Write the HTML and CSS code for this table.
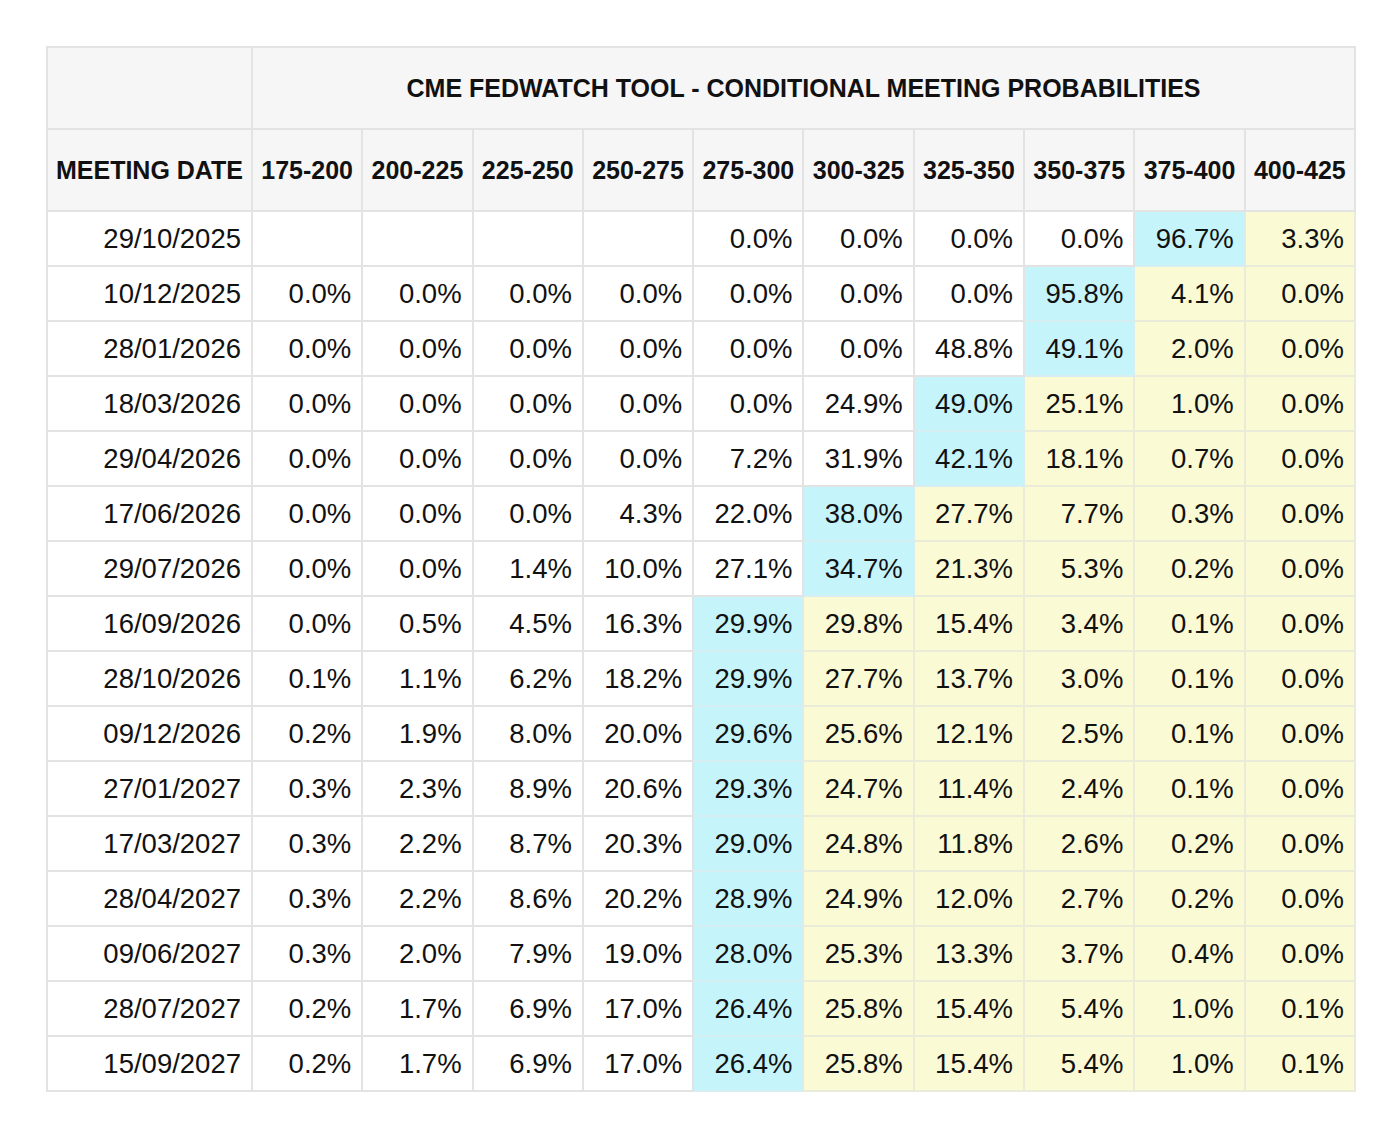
FILE: index.html
```html
<!DOCTYPE html>
<html>
<head>
<meta charset="utf-8">
<link rel="stylesheet" href="styles.css">
</head>
<body>
<table class="fw">
<colgroup>
<col class="c-date">
<col class="c-rate"><col class="c-rate"><col class="c-rate"><col class="c-rate"><col class="c-rate">
<col class="c-rate"><col class="c-rate"><col class="c-rate"><col class="c-rate"><col class="c-rate">
</colgroup>
<thead>
<tr class="hrow">
<th></th>
<th colspan="10">CME FEDWATCH TOOL - CONDITIONAL MEETING PROBABILITIES</th>
</tr>
<tr class="hrow">
<th>MEETING DATE</th>
<th>175-200</th><th>200-225</th><th>225-250</th><th>250-275</th><th>275-300</th>
<th>300-325</th><th>325-350</th><th>350-375</th><th>375-400</th><th>400-425</th>
</tr>
</thead>
<tbody>
<tr><td>29/10/2025</td><td></td><td></td><td></td><td></td><td>0.0%</td><td>0.0%</td><td>0.0%</td><td>0.0%</td><td class="b">96.7%</td><td class="y">3.3%</td></tr>
<tr><td>10/12/2025</td><td>0.0%</td><td>0.0%</td><td>0.0%</td><td>0.0%</td><td>0.0%</td><td>0.0%</td><td>0.0%</td><td class="b">95.8%</td><td class="y">4.1%</td><td class="y">0.0%</td></tr>
<tr><td>28/01/2026</td><td>0.0%</td><td>0.0%</td><td>0.0%</td><td>0.0%</td><td>0.0%</td><td>0.0%</td><td>48.8%</td><td class="b">49.1%</td><td class="y">2.0%</td><td class="y">0.0%</td></tr>
<tr><td>18/03/2026</td><td>0.0%</td><td>0.0%</td><td>0.0%</td><td>0.0%</td><td>0.0%</td><td>24.9%</td><td class="b">49.0%</td><td class="y">25.1%</td><td class="y">1.0%</td><td class="y">0.0%</td></tr>
<tr><td>29/04/2026</td><td>0.0%</td><td>0.0%</td><td>0.0%</td><td>0.0%</td><td>7.2%</td><td>31.9%</td><td class="b">42.1%</td><td class="y">18.1%</td><td class="y">0.7%</td><td class="y">0.0%</td></tr>
<tr><td>17/06/2026</td><td>0.0%</td><td>0.0%</td><td>0.0%</td><td>4.3%</td><td>22.0%</td><td class="b">38.0%</td><td class="y">27.7%</td><td class="y">7.7%</td><td class="y">0.3%</td><td class="y">0.0%</td></tr>
<tr><td>29/07/2026</td><td>0.0%</td><td>0.0%</td><td>1.4%</td><td>10.0%</td><td>27.1%</td><td class="b">34.7%</td><td class="y">21.3%</td><td class="y">5.3%</td><td class="y">0.2%</td><td class="y">0.0%</td></tr>
<tr><td>16/09/2026</td><td>0.0%</td><td>0.5%</td><td>4.5%</td><td>16.3%</td><td class="b">29.9%</td><td class="y">29.8%</td><td class="y">15.4%</td><td class="y">3.4%</td><td class="y">0.1%</td><td class="y">0.0%</td></tr>
<tr><td>28/10/2026</td><td>0.1%</td><td>1.1%</td><td>6.2%</td><td>18.2%</td><td class="b">29.9%</td><td class="y">27.7%</td><td class="y">13.7%</td><td class="y">3.0%</td><td class="y">0.1%</td><td class="y">0.0%</td></tr>
<tr><td>09/12/2026</td><td>0.2%</td><td>1.9%</td><td>8.0%</td><td>20.0%</td><td class="b">29.6%</td><td class="y">25.6%</td><td class="y">12.1%</td><td class="y">2.5%</td><td class="y">0.1%</td><td class="y">0.0%</td></tr>
<tr><td>27/01/2027</td><td>0.3%</td><td>2.3%</td><td>8.9%</td><td>20.6%</td><td class="b">29.3%</td><td class="y">24.7%</td><td class="y">11.4%</td><td class="y">2.4%</td><td class="y">0.1%</td><td class="y">0.0%</td></tr>
<tr><td>17/03/2027</td><td>0.3%</td><td>2.2%</td><td>8.7%</td><td>20.3%</td><td class="b">29.0%</td><td class="y">24.8%</td><td class="y">11.8%</td><td class="y">2.6%</td><td class="y">0.2%</td><td class="y">0.0%</td></tr>
<tr><td>28/04/2027</td><td>0.3%</td><td>2.2%</td><td>8.6%</td><td>20.2%</td><td class="b">28.9%</td><td class="y">24.9%</td><td class="y">12.0%</td><td class="y">2.7%</td><td class="y">0.2%</td><td class="y">0.0%</td></tr>
<tr><td>09/06/2027</td><td>0.3%</td><td>2.0%</td><td>7.9%</td><td>19.0%</td><td class="b">28.0%</td><td class="y">25.3%</td><td class="y">13.3%</td><td class="y">3.7%</td><td class="y">0.4%</td><td class="y">0.0%</td></tr>
<tr><td>28/07/2027</td><td>0.2%</td><td>1.7%</td><td>6.9%</td><td>17.0%</td><td class="b">26.4%</td><td class="y">25.8%</td><td class="y">15.4%</td><td class="y">5.4%</td><td class="y">1.0%</td><td class="y">0.1%</td></tr>
<tr><td>15/09/2027</td><td>0.2%</td><td>1.7%</td><td>6.9%</td><td>17.0%</td><td class="b">26.4%</td><td class="y">25.8%</td><td class="y">15.4%</td><td class="y">5.4%</td><td class="y">1.0%</td><td class="y">0.1%</td></tr>
</tbody>
</table>
</body>
</html>
```
FILE: styles.css
```css
html, body {
  margin: 0;
  padding: 0;
  background: #ffffff;
}
body {
  padding: 46px 0 0 46px;
  font-family: "Liberation Sans", Arial, sans-serif;
  color: #111111;
}
.fw {
  border-collapse: collapse;
  table-layout: fixed;
  width: 1308px;
}
.c-date { width: 205px; }
.c-rate { width: 110.3px; }
.fw th, .fw td {
  border: 2px solid #e3e3e3;
  padding: 0 10px 0 0;
  box-sizing: border-box;
  white-space: nowrap;
  overflow: hidden;
}
.fw th {
  background: #f6f6f6;
  font-size: 25px;
  font-weight: bold;
  text-align: center;
  padding: 0;
  height: 82px;
  color: #111111;
}
.fw td {
  font-size: 27.5px;
  text-align: right;
  height: 55px;
  background: #ffffff;
}
.fw td.b {
  background: #c6f4fb;
  border-color: #d6eef2;
}
.fw td.y {
  background: #fafad4;
  border-color: #ebebd9;
}
```
